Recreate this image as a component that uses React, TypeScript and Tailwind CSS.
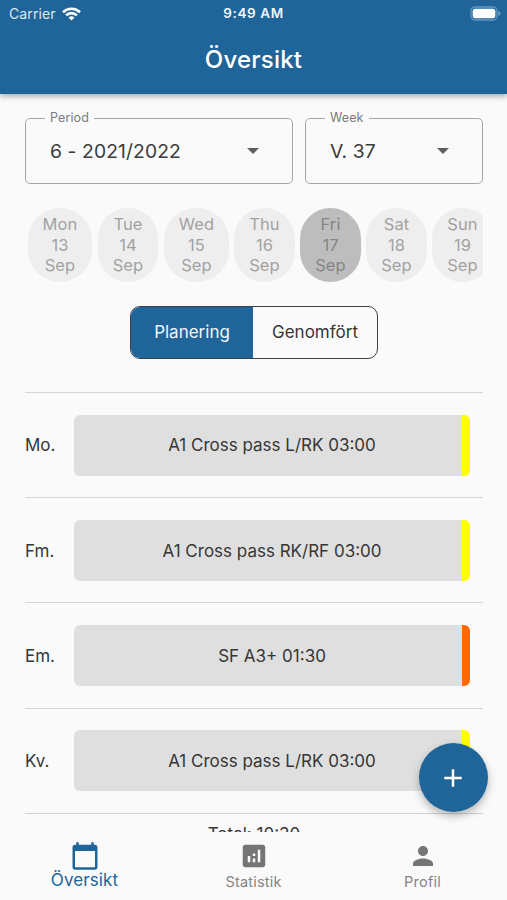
import React from "react";
import { MdCalendarToday, MdAnalytics, MdPerson, MdAdd } from "react-icons/md";

const days = [
  { name: "Mon", date: "13", box: "w-[64px] mr-[6px]" },
  { name: "Tue", date: "14", box: "w-[60px] mr-[6px]" },
  { name: "Wed", date: "15", box: "w-[65px] mr-[5px]" },
  { name: "Thu", date: "16", box: "w-[61px] mr-[5px]" },
  { name: "Fri", date: "17", box: "w-[61px] mr-[5px]", selected: true },
  { name: "Sat", date: "18", box: "w-[61px] mr-[5px]" },
  { name: "Sun", date: "19", box: "w-[61px]" },
];

const sessions = [
  { slot: "Mo.", title: "A1 Cross pass L/RK 03:00", stripe: "bg-[#ffff00]" },
  { slot: "Fm.", title: "A1 Cross pass RK/RF 03:00", stripe: "bg-[#ffff00]" },
  { slot: "Em.", title: "SF A3+ 01:30", stripe: "bg-[#ff6a00]" },
  { slot: "Kv.", title: "A1 Cross pass L/RK 03:00", stripe: "bg-[#ffff00]" },
];

function StatusBar() {
  return (
    <div className="grid h-[27px] grid-cols-3 items-center pr-[6px] pl-[9px] text-[13.5px]">
      <div className="flex items-center gap-[6px] text-[#dbe9f4]">
        <span className="text-[14px] tracking-[0.1px]">Carrier</span>
        <svg width="19" height="14" viewBox="0 0 19 14" fill="none" stroke="#fff" strokeWidth="2.7">
          <path d="M1 5.2C5.7.6 13.3.6 18 5.2" />
          <path d="M4.1 8.4C7.1 5.4 11.9 5.4 14.9 8.4" />
          <path d="M6.6 10.4Q9.5 8 12.4 10.4L9.5 13.4Z" fill="#fff" stroke="none" />
        </svg>
      </div>
      <span className="-ml-[3px] text-center font-semibold tracking-[0.6px] whitespace-nowrap text-[#eef5fa]">9:49 AM</span>
      <svg className="justify-self-end" width="31" height="15" viewBox="0 0 31 15">
        <rect x="1" y="1" width="26" height="13" rx="4" fill="none" stroke="#6697bd" strokeWidth="1.3" />
        <rect x="2.7" y="2.7" width="22.6" height="9.6" rx="2.5" fill="#fff" />
        <path d="M28.5 5v5q2-.8 2-2.5t-2-2.5z" fill="#7ba5c6" />
      </svg>
    </div>
  );
}

function SelectField({ label, value, box, arrow }: { label: string; value: string; box: string; arrow: string }) {
  return (
    <fieldset className={`${box} h-[73px] min-w-0 rounded-[5px] border-[1.5px] border-[#a6a6a6]`}>
      <legend className="ml-[19px] h-[14px] px-[5px] text-[12.5px] leading-[14px] tracking-[0.1px] text-[#7b7b7b]">
        {label}
      </legend>
      <div className={`flex h-[52px] items-center justify-between pl-[24px] ${arrow}`}>
        <span className="text-[19.3px] tracking-[0.1px] text-[#3c3c3c]">{value}</span>
        <span className="h-0 w-0 border-x-[6px] border-t-[6px] border-x-transparent border-t-[#5f5f5f]" />
      </div>
    </fieldset>
  );
}

export default function App() {
  return (
    <div className="relative flex h-[900px] w-[507px] flex-col overflow-hidden bg-[#fafafa] font-['Inter',sans-serif] text-[#363636]">
      <header className="z-10 h-[94px] shrink-0 bg-[#20659a] shadow-[0_2px_6px_rgba(0,0,0,0.35)]">
        <StatusBar />
        <h1 className="pt-[16px] text-center text-[24px] leading-[34px] font-medium tracking-[0.2px] text-white">Översikt</h1>
      </header>

      <main className="flex min-h-0 flex-1 flex-col overflow-hidden pr-[24px] pl-[25px]">
        <div className="mt-[17px] flex shrink-0 justify-between">
          <SelectField label="Period" value="6 - 2021/2022" box="w-[268px]" arrow="pr-[33px]" />
          <SelectField label="Week" value="V. 37" box="w-[178px]" arrow="pr-[33px]" />
        </div>

        <div className="mt-[24px] flex h-[74px] shrink-0 overflow-hidden pl-[3px]">
          {days.map((d) => (
            <div
              key={d.date}
              className={`${d.box} ${d.selected ? "bg-[#bdbdbd] text-[#858585]" : "bg-[#eeeeee] text-[#a2a2a2]"} flex h-[74px] shrink-0 flex-col items-center justify-center rounded-[32px] text-[16.5px] leading-[20.8px] tracking-[0.1px]`}
            >
              <span>{d.name}</span>
              <span>{d.date}</span>
              <span>Sep</span>
            </div>
          ))}
        </div>

        <div className="mt-[24px] ml-[105px] flex h-[53px] w-[248px] shrink-0 overflow-hidden rounded-[10px] border-[1.5px] border-[#3a3f43] text-[17px]">
          <div className="flex w-[122px] items-center justify-center bg-[#20659a] pt-px text-[#eef5fb]">Planering</div>
          <div className="flex flex-1 items-center justify-center pt-px">Genomfört</div>
        </div>

        <div className="mt-[33px] shrink-0">
          {sessions.map((s) => (
            <div key={s.slot} className="flex h-[105.2px] items-center border-t-[1.5px] border-[#d6d6d6] pr-[13px] text-[17px]">
              <span className="w-[49px] pt-[2px]">{s.slot}</span>
              <div className="flex h-[61px] flex-1 overflow-hidden rounded-[6px] bg-[#dfdfdf]">
                <span className="flex flex-1 items-center justify-center pt-[2px] pl-[8px]">{s.title}</span>
                <span className={`w-[8px] ${s.stripe}`} />
              </div>
            </div>
          ))}
          <div className="border-t-[1.5px] border-[#d0d0d0] pt-[9px] text-center text-[17px] leading-[22px]">Total: 10:30</div>
        </div>
      </main>

      <nav className="grid h-[68px] shrink-0 grid-cols-3 bg-[#fafafa] text-[#757575] shadow-[0_-1px_2px_rgba(0,0,0,0.02)]">
        <div className="flex flex-col items-center pt-[9px] text-[#20659a]">
          <MdCalendarToday size={30} />
          <span className="-mt-px text-[17px] leading-[20px] tracking-[0.1px]">Översikt</span>
        </div>
        <div className="flex flex-col items-center pt-[9px]">
          <MdAnalytics size={30} />
          <span className="mt-px text-[14.5px] leading-[20px] tracking-[0.2px] text-[#858585]">Statistik</span>
        </div>
        <div className="flex flex-col items-center pt-[9px]">
          <MdPerson size={30} />
          <span className="mt-px text-[14.5px] leading-[20px] tracking-[0.2px] text-[#858585]">Profil</span>
        </div>
      </nav>

      <button className="absolute top-[743px] left-[418.5px] z-20 flex h-[69px] w-[69px] items-center justify-center rounded-full bg-[#20659a] text-white shadow-[0_4px_8px_rgba(0,0,0,0.28)]">
        <MdAdd size={30} />
      </button>
    </div>
  );
}
